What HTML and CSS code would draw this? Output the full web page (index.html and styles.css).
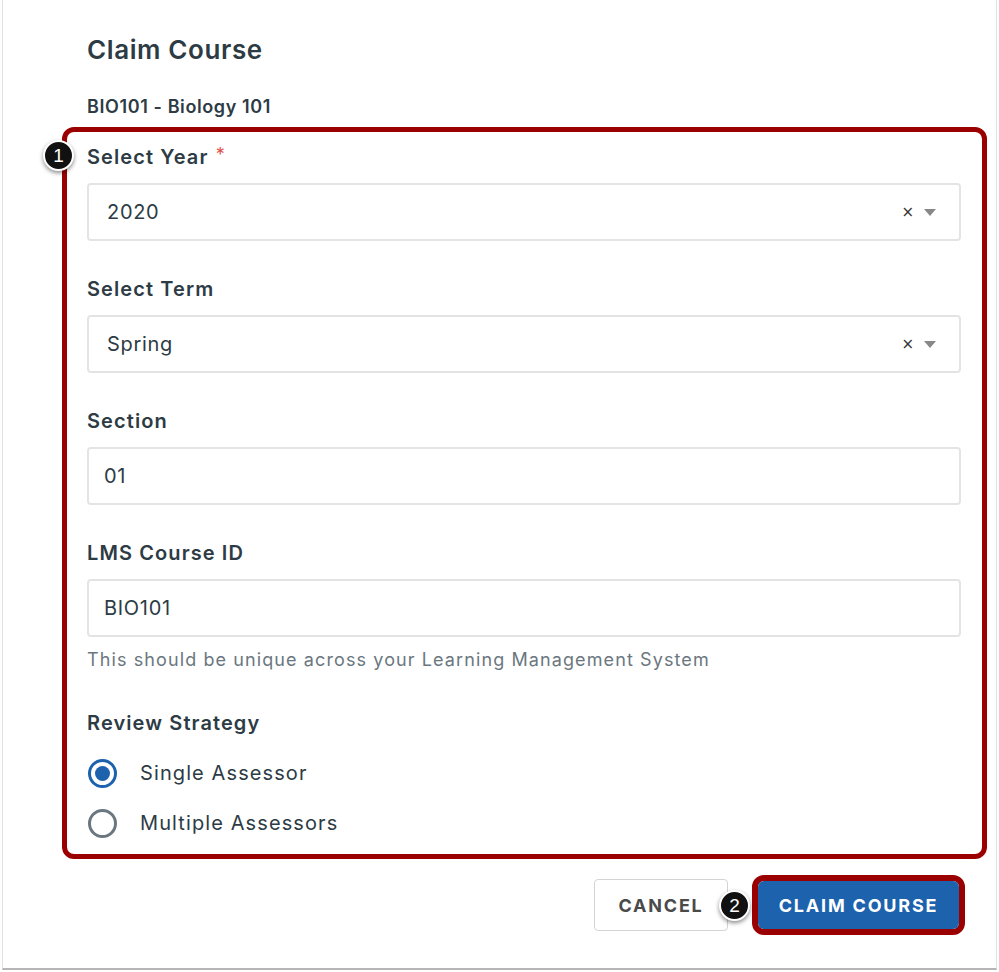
FILE: index.html
```html
<!DOCTYPE html>
<html>
<head>
<meta charset="utf-8">
<link rel="stylesheet" href="styles.css">
</head>
<body>
<div class="frame">
  <h1 class="title">Claim Course</h1>
  <div class="course">BIO101 - Biology 101</div>
  <div class="highlight">
    <span class="badge badge-1">1</span>
    <div class="field">
      <div class="label">Select Year <span class="req">*</span></div>
      <div class="input select">
        <span class="value">2020</span>
        <span class="controls"><span class="clear">×</span><span class="caret"></span></span>
      </div>
    </div>
    <div class="field">
      <div class="label">Select Term</div>
      <div class="input select">
        <span class="value">Spring</span>
        <span class="controls"><span class="clear">×</span><span class="caret"></span></span>
      </div>
    </div>
    <div class="field">
      <div class="label">Section</div>
      <div class="input text"><span class="value">01</span></div>
    </div>
    <div class="field last">
      <div class="label">LMS Course ID</div>
      <div class="input text"><span class="value">BIO101</span></div>
      <div class="hint">This should be unique across your Learning Management System</div>
    </div>
    <div class="label strategy">Review Strategy</div>
    <div class="radio-row"><span class="radio checked"></span><span class="radio-label">Single Assessor</span></div>
    <div class="radio-row"><span class="radio"></span><span class="radio-label">Multiple Assessors</span></div>
  </div>
  <div class="actions">
    <button class="btn cancel">CANCEL</button>
    <div class="claim-wrap">
      <span class="badge badge-2">2</span>
      <button class="btn claim">CLAIM COURSE</button>
    </div>
  </div>
</div>
</body>
</html>
```
FILE: styles.css
```css
* { box-sizing: border-box; }
html, body { margin: 0; padding: 0; background: #fff; }
body { font-family: "Inter", "Liberation Sans", sans-serif; color: #2d3b45; }
.frame {
  margin-left: 2px;
  width: 995px;
  height: 970px;
  border: 1px solid #e2e2e2;
  border-top: none;
  border-bottom: 2px solid #b5b5b5;
  padding: 34px 31px 0 59px;
}
.title {
  margin: 0 0 0 25px;
  font-size: 26px;
  line-height: 32px;
  font-weight: 600;
  letter-spacing: 0.6px;
  color: #2d3b45;
}
.course {
  margin: 30px 0 0 25px;
  font-size: 18px;
  line-height: 22px;
  font-weight: 600;
  letter-spacing: 0.6px;
  color: #2d3b45;
}
.highlight {
  position: relative;
  margin-top: 9px;
  width: 925px;
  border: 5px solid #9b0000;
  border-radius: 12px;
  padding: 13px 21px 13px 20px;
}
.badge {
  position: absolute;
  width: 31px;
  height: 31px;
  border-radius: 50%;
  background: #111;
  border: 2px solid #fff;
  box-shadow: 0 2px 4px rgba(0,0,0,0.45);
  color: #fff;
  font-size: 19px;
  line-height: 27px;
  text-align: center;
  font-family: "Liberation Sans", sans-serif;
}
.badge-1 { left: -24px; top: 8px; }
.badge-2 { left: -39px; top: 9px; z-index: 2; }
.field { margin-bottom: 36px; }
.field.last { margin-bottom: 40px; }
.label {
  font-size: 20px;
  line-height: 24px;
  font-weight: 600;
  letter-spacing: 1.1px;
  color: #2d3b45;
  margin-bottom: 14px;
}
.req { color: #e0524b; font-size: 18px; font-weight: 400; vertical-align: top; line-height: 20px; margin-left: 1px; }
.input {
  height: 58px;
  border: 2px solid #e4e4e4;
  border-radius: 4px;
  display: flex;
  align-items: center;
  font-size: 20px;
  letter-spacing: 0.7px;
  color: #2d3b45;
}
.select { padding: 0 23px 0 18px; justify-content: space-between; }
.text { padding: 0 15px; }
.controls { display: flex; align-items: center; gap: 10px; letter-spacing: 0; }
.clear { color: #333; line-height: 20px; font-family: "DejaVu Sans", sans-serif; font-size: 15px; }
.caret {
  width: 0; height: 0;
  border-left: 6px solid transparent;
  border-right: 6px solid transparent;
  border-top: 7px solid #888;
}
.hint {
  margin-top: 12px;
  font-size: 18px;
  line-height: 22px;
  letter-spacing: 1.1px;
  color: #6b7780;
}
.strategy { margin-bottom: 20px; }
.radio-row {
  height: 36px;
  display: flex;
  align-items: center;
  margin-bottom: 14px;
}
.radio-row:last-child { margin-bottom: 0; }
.radio {
  width: 29px; height: 29px;
  border-radius: 50%;
  border: 3px solid #6b7780;
  margin-left: 1px;
  display: flex; align-items: center; justify-content: center;
}
.radio.checked { border-color: #1d62ad; }
.radio.checked::after {
  content: "";
  width: 15px; height: 15px;
  border-radius: 50%;
  background: #1d62ad;
}
.radio-label { margin-left: 23px; font-size: 20px; letter-spacing: 1.1px; color: #2d3b45; }
.actions {
  margin-top: 16px;
  display: flex;
  justify-content: flex-end;
  align-items: center;
  gap: 24px;
}
.btn {
  font-family: "Inter", "Liberation Sans", sans-serif;
  font-weight: 700;
  font-size: 18px;
  letter-spacing: 1.8px;
  cursor: pointer;
}
.cancel {
  width: 134px; height: 52px;
  background: #fff;
  border: 1px solid #d4d4d4;
  border-radius: 4px;
  color: #4a4a4a;
}
.claim-wrap {
  position: relative;
  border: 6px solid #9b0000;
  border-radius: 12px;
}
.claim {
  display: block;
  width: 201px; height: 48px;
  background: #1d62ad;
  border: none;
  border-radius: 6px;
  color: #fff;
}
```
